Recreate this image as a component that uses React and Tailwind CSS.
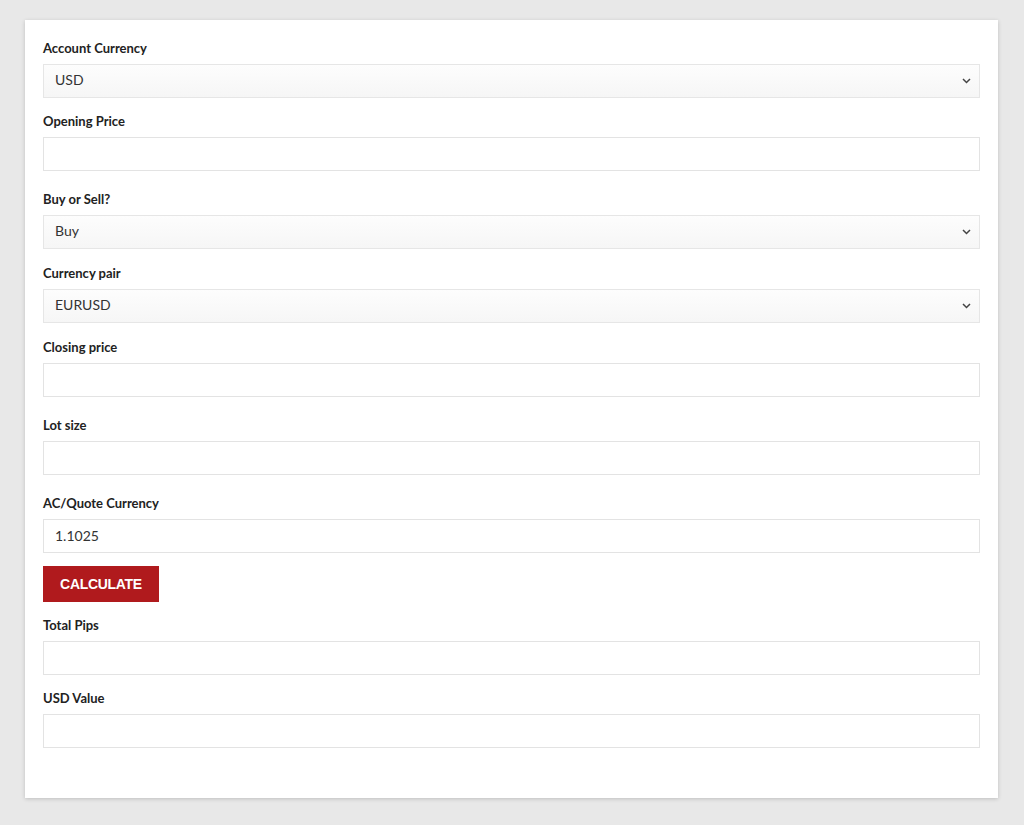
import React from 'react';

const font = { fontFamily: 'Lato, "Open Sans", sans-serif' };

function Label({ children }) {
    return (
        <label className="block text-[13px] font-bold leading-[18px] text-[#222] mb-[7px]">
            {children}
        </label>
    );
}

function SelectField({ label, value, options, className = 'mb-[14px]' }) {
    return (
        <div className={className}>
            <Label>{label}</Label>
            <div className="relative">
                <select
                    defaultValue={value}
                    className="block w-full h-[34px] appearance-none border border-[#e6e6e6] bg-gradient-to-b from-[#fdfdfd] to-[#f6f6f6] pl-[11px] pr-8 pb-[3px] text-[14px] text-[#333] outline-none"
                >
                    {options.map((o) => (
                        <option key={o}>{o}</option>
                    ))}
                </select>
                <svg
                    className="pointer-events-none absolute right-[9px] top-[14px]"
                    width="9"
                    height="6"
                    viewBox="0 0 9 6"
                    fill="none"
                >
                    <path d="M1 1l3.5 3.5L8 1" stroke="#444" strokeWidth="1.5" />
                </svg>
            </div>
        </div>
    );
}

function InputField({ label, value, className = 'mb-[19px]' }) {
    return (
        <div className={className}>
            <Label>{label}</Label>
            <input
                type="text"
                defaultValue={value}
                className="block w-full h-[34px] border border-[#e3e3e3] bg-white px-[11px] pb-[2px] text-[14px] text-[#333] outline-none"
            />
        </div>
    );
}

export default function App() {
    return (
        <div className="min-h-[825px] bg-[#e8e8e8] pt-[20px] pb-[27px] px-[25px]" style={font}>
            <div className="w-[973px] bg-white px-[18px] pt-[19px] pb-[50px] shadow-[0_1px_4px_rgba(0,0,0,0.18)]">
                <SelectField label="Account Currency" value="USD" options={['USD', 'EUR', 'GBP', 'JPY']} />
                <InputField label="Opening Price" />
                <SelectField label="Buy or Sell?" value="Buy" options={['Buy', 'Sell']} className="mb-[15px]" />
                <SelectField label="Currency pair" value="EURUSD" options={['EURUSD', 'GBPUSD', 'USDJPY']} className="mb-[15px]" />
                <InputField label="Closing price" />
                <InputField label="Lot size" />
                <InputField label="AC/Quote Currency" value="1.1025" className="mb-[13px]" />
                <button
                    type="button"
                    className="block h-[36px] w-[116px] bg-[#b01a1d] text-[14px] font-bold uppercase tracking-[-0.3px] text-white mb-[14px]"
                    style={{ fontFamily: '"Liberation Sans", Arial, sans-serif' }}
                >
                    Calculate
                </button>
                <InputField label="Total Pips" className="mb-[14px]" />
                <InputField label="USD Value" className="" />
            </div>
        </div>
    );
}
